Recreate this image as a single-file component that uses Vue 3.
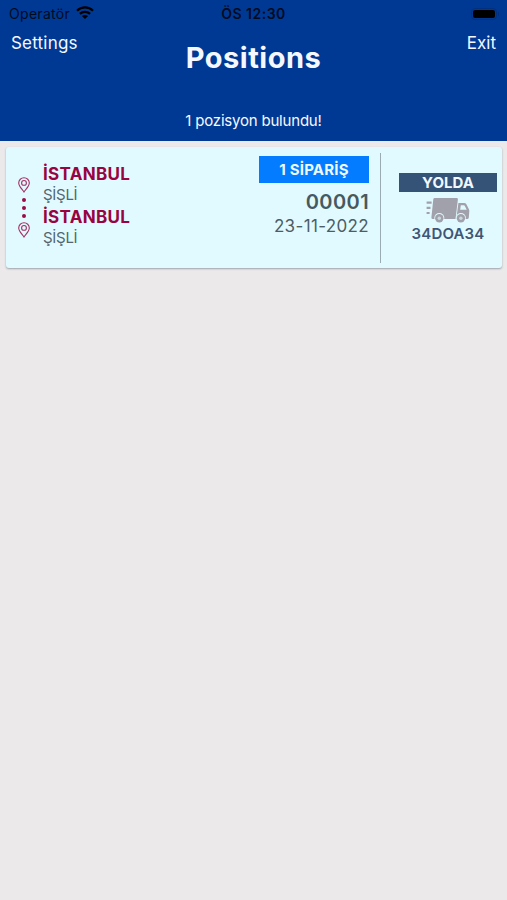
<script setup>
const stops = [
  { city: 'İSTANBUL', district: 'ŞİŞLİ' },
  { city: 'İSTANBUL', district: 'ŞİŞLİ' },
]
</script>

<template>
  <div class="screen">
    <header class="header">
      <div class="status">
        <div class="carrier">
          <span>Operatör</span>
          <svg class="wifi" viewBox="0 0 18 13" width="18" height="13">
            <path d="M1 4.700C5.400.3 12.600.3 17 4.700M3.900 7.900c2.900-2.700 7.300-2.700 10.200 0" fill="none" stroke="#000" stroke-width="2.300" />
            <path d="M5.900 10.100c1.800-1.500 4.400-1.500 6.200 0L9 13Z" fill="#000" />
          </svg>
        </div>
        <span class="clock">ÖS 12:30</span>
        <div class="battery"><i class="shell"><i class="charge"></i></i><i class="cap"></i></div>
      </div>
      <nav class="nav">
        <a class="settings">Settings</a>
        <h1 class="title">Positions</h1>
        <a class="exit">Exit</a>
      </nav>
      <p class="found">1 pozisyon bulundu!</p>
    </header>

    <article class="card">
      <div class="track">
        <svg class="pin" viewBox="0 0 12 16" width="12" height="16">
          <path d="M6 15C4.400 12.500.7 9.200.7 6a5.300 5.300 0 0 1 10.600 0C11.300 9.200 7.600 12.500 6 15Z" />
          <circle cx="6" cy="5.900" r="2.400" />
        </svg>
        <div class="dots"><i></i><i></i><i></i></div>
        <svg class="pin" viewBox="0 0 12 16" width="12" height="16">
          <path d="M6 15C4.400 12.500.7 9.200.7 6a5.300 5.300 0 0 1 10.600 0C11.300 9.200 7.600 12.500 6 15Z" />
          <circle cx="6" cy="5.900" r="2.400" />
        </svg>
      </div>
      <div class="route">
        <div v-for="(s, i) in stops" :key="i" class="stop">
          <div class="city">{{ s.city }}</div>
          <div class="district">{{ s.district }}</div>
        </div>
      </div>
      <div class="order">
        <div class="badge"><span>1 SİPARİŞ</span></div>
        <div class="number">00001</div>
        <div class="date">23-11-2022</div>
      </div>
      <div class="divider"></div>
      <div class="vehicle">
        <div class="state"><span>YOLDA</span></div>
        <svg class="truck" viewBox="0 0 44 26" width="44" height="26">
          <g fill="#a1a1ab">
            <path d="M8.600 1H30.700q1.400 0 1.200 1.400L29.500 22H6.500q-1.300 0-1.100-1.400L7.300 2.200Q7.500 1 8.600 1Z" />
            <path fill-rule="evenodd" d="M32.400 6h5.700q1.600 0 2.300 1.300l2.500 4.900q.5 1 .4 2.100l-.5 6.200q-.2 1.500-1.700 1.500H30.300ZM34.800 8.200l-.6 4.600h6.500l-2-4q-.4-.6-1.100-.6Z" />
            <path d="M.6 4.500h5v2.200h-5ZM.6 9.700h3.900v2.200H.6ZM.6 14.900h3v2.200h-3Z" />
          </g>
          <g fill="#e1faff">
            <circle cx="13.300" cy="21" r="5" /><circle cx="34.900" cy="21" r="5" />
          </g>
          <g fill="#a1a1ab">
            <circle cx="13.300" cy="21.200" r="4.200" /><circle cx="34.900" cy="21.200" r="4.200" />
          </g>
          <g fill="#c9d8df">
            <circle cx="13.300" cy="21.200" r="1.700" /><circle cx="34.900" cy="21.200" r="1.700" />
          </g>
        </svg>
        <div class="plate">34DOA34</div>
      </div>
    </article>
  </div>
</template>

<style>
body { margin: 0; background: #ebe9ea; }
</style>

<style scoped>
.screen { width: 507px; height: 900px; overflow: hidden; background: #ebe9ea; font-family: Inter, "Liberation Sans", sans-serif; white-space: nowrap; }
.header { height: 141px; background: #003994; color: #f5f8ff; }
.status { height: 27px; display: grid; grid-template-columns: 1fr auto 1fr; align-items: center; color: #000b22; }
.carrier { display: flex; align-items: center; gap: 6px; padding-left: 9px; font-size: 14px; line-height: 27px; letter-spacing: .3px; }
.wifi { margin-top: -2px; }
.clock { font-size: 14px; font-weight: 600; line-height: 27px; letter-spacing: .5px; }
.battery { display: flex; align-items: center; justify-content: flex-end; gap: 1px; padding-right: 8px; }
.shell { box-sizing: border-box; width: 26px; height: 12px; padding: 1px; border: 1px solid #00307f; border-radius: 4px; }
.charge { display: block; height: 8px; border-radius: 2px; background: #000; }
.cap { width: 1px; height: 4px; background: #00307f; }
.nav { height: 80px; display: grid; grid-template-columns: 1fr auto 1fr; align-items: start; }
.settings, .exit { padding: 5px 11px 0; font-size: 17px; line-height: 22px; letter-spacing: .2px; }
.exit { text-align: right; letter-spacing: 0; }
.title { margin: 13px 0 0; font-size: 29px; line-height: 36px; font-weight: 700; letter-spacing: .5px; }
.found { margin: 4px 0 0; text-align: center; font-size: 15px; line-height: 20px; letter-spacing: -.2px; }
.card { box-sizing: border-box; height: 121px; margin: 6px 5px 0 6px; display: flex; background: #e1faff; border-radius: 3px; box-shadow: 0 1px 2px #9aa3a8; }
.track { width: 36px; margin-right: 1px; padding-top: 30px; display: flex; flex-direction: column; align-items: center; }
.pin { fill: none; stroke: #a33162; stroke-width: 1.100; display: block; }
.dots { height: 29px; display: flex; flex-direction: column; align-items: center; justify-content: center; gap: 4px; }
.dots i { width: 4px; height: 4px; border-radius: 50%; background: #9b0b45; }
.route { flex: 1; padding-top: 17px; }
.stop { height: 43px; }
.city { color: #98043f; font-size: 17px; line-height: 21px; font-weight: 700; letter-spacing: .3px; }
.district { color: #53666f; font-size: 15px; line-height: 19px; letter-spacing: -.3px; }
.order { width: 110px; padding: 9px 12px 0 0; text-align: right; }
.badge { height: 27px; background: #047cff; color: #f0f8ff; text-align: center; font-size: 15px; line-height: 27px; font-weight: 700; letter-spacing: .2px; }
.number { margin-top: 6px; color: #475960; font-size: 20px; line-height: 26px; font-weight: 600; letter-spacing: .4px; }
.date { color: #4c5d65; font-size: 17px; line-height: 22px; letter-spacing: .35px; }
.divider { width: 1px; height: 110px; margin-top: 6px; margin-left: -1px; background: #9aabb2; }
.vehicle { width: 98px; padding: 26px 5px 0 18px; display: flex; flex-direction: column; align-items: center; }
.state { align-self: stretch; height: 19px; background: #345376; color: #f2f8ff; text-align: center; font-size: 15px; line-height: 20px; font-weight: 700; }
.truck { display: block; margin-top: 5px; }
.plate { color: #405575; font-size: 15px; line-height: 20px; font-weight: 600; margin-top: 1px; letter-spacing: .15px; }
</style>
